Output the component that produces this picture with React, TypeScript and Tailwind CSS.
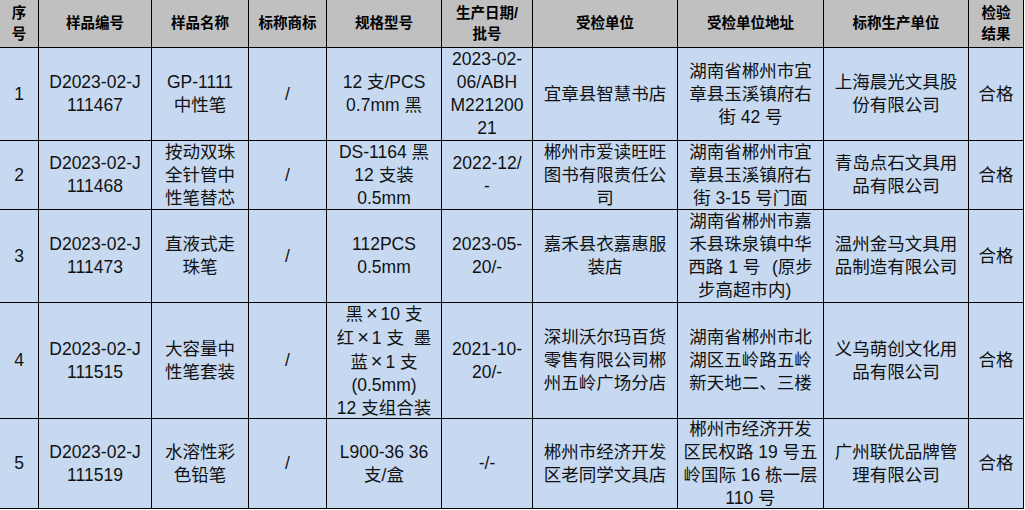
const headers = [
  "序\n号",
  "样品编号",
  "样品名称",
  "标称商标",
  "规格型号",
  "生产日期/\n批号",
  "受检单位",
  "受检单位地址",
  "标称生产单位",
  "检验\n结果",
];

const rows: string[][] = [
  [
    "1",
    "D2023-02-J\n111467",
    "GP-1111\n中性笔",
    "/",
    "12 支/PCS\n0.7mm 黑",
    "2023-02-\n06/ABH\nM221200\n21",
    "宜章县智慧书店",
    "湖南省郴州市宜\n章县玉溪镇府右\n街 42 号",
    "上海晨光文具股\n份有限公司",
    "合格",
  ],
  [
    "2",
    "D2023-02-J\n111468",
    "按动双珠\n全针管中\n性笔替芯",
    "/",
    "DS-1164 黑\n12 支装\n0.5mm",
    "2022-12/\n-",
    "郴州市爱读旺旺\n图书有限责任公\n司",
    "湖南省郴州市宜\n章县玉溪镇府右\n街 3-15 号门面",
    "青岛点石文具用\n品有限公司",
    "合格",
  ],
  [
    "3",
    "D2023-02-J\n111473",
    "直液式走\n珠笔",
    "/",
    "112PCS\n0.5mm",
    "2023-05-\n20/-",
    "嘉禾县衣嘉惠服\n装店",
    "湖南省郴州市嘉\n禾县珠泉镇中华\n西路 1 号（原步\n步高超市内）",
    "温州金马文具用\n品制造有限公司",
    "合格",
  ],
  [
    "4",
    "D2023-02-J\n111515",
    "大容量中\n性笔套装",
    "/",
    "黑×10 支\n红×1 支  墨\n蓝×1 支\n（0.5mm）\n12 支组合装",
    "2021-10-\n20/-",
    "深圳沃尔玛百货\n零售有限公司郴\n州五岭广场分店",
    "湖南省郴州市北\n湖区五岭路五岭\n新天地二、三楼",
    "义乌萌创文化用\n品有限公司",
    "合格",
  ],
  [
    "5",
    "D2023-02-J\n111519",
    "水溶性彩\n色铅笔",
    "/",
    "L900-36 36\n支/盒",
    "-/-",
    "郴州市经济开发\n区老同学文具店",
    "郴州市经济开发\n区民权路 19 号五\n岭国际 16 栋一层\n110 号",
    "广州联优品牌管\n理有限公司",
    "合格",
  ],
];

// the sheet shows × and the brackets full width
function renderLine(s: string) {
  return s.split(/([×（）])/).map((part, i) => {
    if (part === "×")
      return (
        <span key={i} className="inline-block w-[17.5px] text-center text-[20px]">
          ×
        </span>
      );
    if (part === "（")
      return (
        <span key={i} className="inline-block w-[17.5px] text-right">
          (
        </span>
      );
    if (part === "）")
      return (
        <span key={i} className="inline-block w-[17.5px] text-left">
          )
        </span>
      );
    return part;
  });
}

function Lines({ text }: { text: string }) {
  return (
    <div>
      {text.split("\n").map((l, i) => (
        <div key={i}>{renderLine(l)}</div>
      ))}
    </div>
  );
}

export default function App() {
  return (
    <div className="w-[1025px] h-[510px] bg-white overflow-hidden font-['Liberation_Sans','Noto_Sans_CJK_SC',sans-serif]">
      <div className="grid w-[1024px] grid-cols-[39px_113px_97px_78px_115px_91px_145px_146px_145px_55px] grid-rows-[48px_93px_69px_93px_116px_90px]">
        {/* header */}
        {headers.map((h, i) => (
          <div
            key={i}
            className="flex items-center justify-center text-center whitespace-pre bg-[#c0c0c0] border-r border-b border-black text-[14.5px] leading-[21px] font-bold text-black"
          >
            <Lines text={h} />
          </div>
        ))}

        {/* body */}
        {rows.map((r, ri) =>
          r.map((c, ci) => (
            <div
              key={ri + "-" + ci}
              className="flex items-center justify-center text-center whitespace-pre bg-[#c6d9f1] border-r border-b border-black text-[17.5px] leading-[23px] text-[#111]"
            >
              <Lines text={c} />
            </div>
          ))
        )}
      </div>
    </div>
  );
}
